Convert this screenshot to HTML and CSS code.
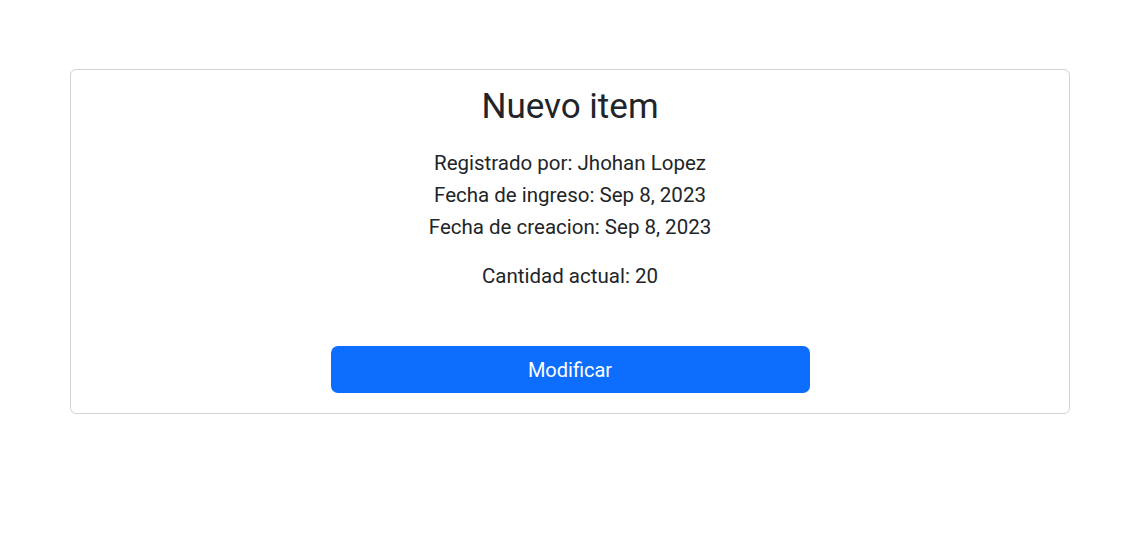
FILE: index.html
```html
<!DOCTYPE html>
<html lang="es">
<head>
<meta charset="utf-8">
<link rel="stylesheet" href="styles.css">
</head>
<body>
<main class="page">
  <section class="card">
    <h2 class="title">Nuevo item</h2>
    <div class="meta">
      <p>Registrado por: Jhohan Lopez</p>
      <p>Fecha de ingreso: Sep 8, 2023</p>
      <p>Fecha de creacion: Sep 8, 2023</p>
    </div>
    <p class="qty">Cantidad actual: 20</p>
    <button class="btn" type="button">Modificar</button>
  </section>
</main>
</body>
</html>
```
FILE: styles.css
```css
html, body { margin: 0; padding: 0; background: #fff; }
body {
  font-family: Roboto, "Liberation Sans", sans-serif;
  color: #212529;
}
.page {
  padding: 69px 0 0 70px;
}
.card {
  box-sizing: border-box;
  width: 1000px;
  height: 345px;
  border: 1px solid #d3d3d3;
  border-radius: 6px;
  display: flex;
  flex-direction: column;
  align-items: center;
}
.title {
  margin: 15px 0 0;
  font-size: 35px;
  font-weight: 400;
  line-height: 44px;
}
.meta { margin-top: 18px; }
.meta p, .qty {
  margin: 0;
  font-size: 20.5px;
  line-height: 32px;
  text-align: center;
}
.qty { margin-top: 17px; }
.btn {
  margin-top: 54px;
  width: 479px;
  height: 47px;
  border: 0;
  border-radius: 7px;
  background: #0d6efd;
  color: #fff;
  font-family: inherit;
  font-size: 20px;
}
```
